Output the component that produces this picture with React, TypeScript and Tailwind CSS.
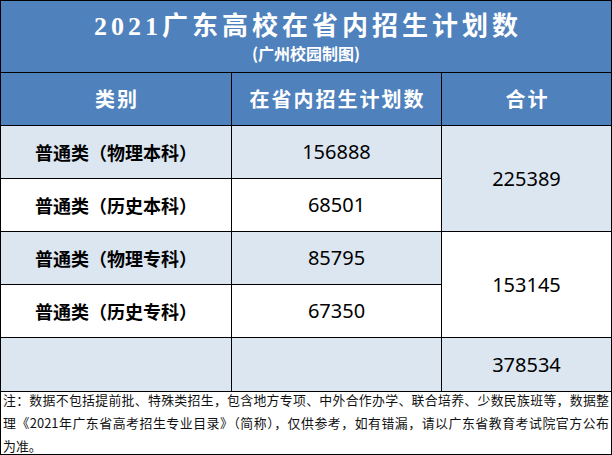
import React from "react";

const CJK = "font-['Noto_Sans_CJK_SC','Noto_Sans',sans-serif]";
const NUM = "font-['Noto_Sans','Noto_Sans_CJK_SC',sans-serif]";
const TITLE = "font-['Liberation_Serif','Noto_Sans_CJK_SC',serif]";

const LB = "bg-[#dce6f1]";
const WH = "bg-white";

function Label({ text, bg }: { text: string; bg: string }) {
  return (
    <div className={`${bg} ${CJK} flex items-center justify-center text-[18px] font-bold text-black leading-none`}>
      {text}
    </div>
  );
}

function Num({ text, bg, span }: { text: string; bg: string; span?: boolean }) {
  return (
    <div
      className={`${bg} ${NUM} flex items-center justify-center text-[20px] text-black leading-none ${span ? "row-span-2" : ""}`}
    >
      {text}
    </div>
  );
}

function Head({ text }: { text: string }) {
  return (
    <div className={`bg-[#4f81bd] ${CJK} flex items-center justify-center text-white text-[20px] font-bold tracking-[2px] pl-[2px]`}>
      {text}
    </div>
  );
}

export default function App() {
  return (
    <div className="w-[612px] h-[455px] border border-black bg-black box-border">
      <div className="grid grid-cols-[230px_209px_169px] grid-rows-[71px_52px_52px_52px_52px_52px_53px_62px] gap-px bg-black w-[610px] h-[453px]">
        <div className="col-span-3 bg-[#4f81bd] flex flex-col items-center pt-[13px] text-white">
          <div className={`${TITLE} text-[26px] font-bold leading-[26px] tracking-[4px] pl-[4px]`}>
            2021广东高校在省内招生计划数
          </div>
          <div className={`${CJK} mt-[5px] text-[16px] font-bold leading-[16px]`}>(广州校园制图)</div>
        </div>

        <Head text="类别" />
        <Head text="在省内招生计划数" />
        <Head text="合计" />

        <Label text="普通类（物理本科）" bg={LB} />
        <Num text="156888" bg={LB} />
        <Num text="225389" bg={LB} span />

        <Label text="普通类（历史本科）" bg={WH} />
        <Num text="68501" bg={WH} />

        <Label text="普通类（物理专科）" bg={LB} />
        <Num text="85795" bg={LB} />
        <Num text="153145" bg={WH} span />

        <Label text="普通类（历史专科）" bg={WH} />
        <Num text="67350" bg={WH} />

        <div className={LB} />
        <div className={LB} />
        <Num text="378534" bg={LB} />

        <div className={`${CJK} col-span-3 bg-white flex flex-col gap-[8px] px-[2px] text-[12.9px] leading-[15px] text-[#111]`}>
          <div className="text-justify [text-align-last:justify]">
            注：数据不包括提前批、特殊类招生，包含地方专项、中外合作办学、联合培养、少数民族班等，数据整
          </div>
          <div className="text-justify [text-align-last:justify]">
            理《2021年广东省高考招生专业目录》（简称），仅供参考，如有错漏，请以广东省教育考试院官方公布
          </div>
          <div>为准。</div>
        </div>
      </div>
    </div>
  );
}
